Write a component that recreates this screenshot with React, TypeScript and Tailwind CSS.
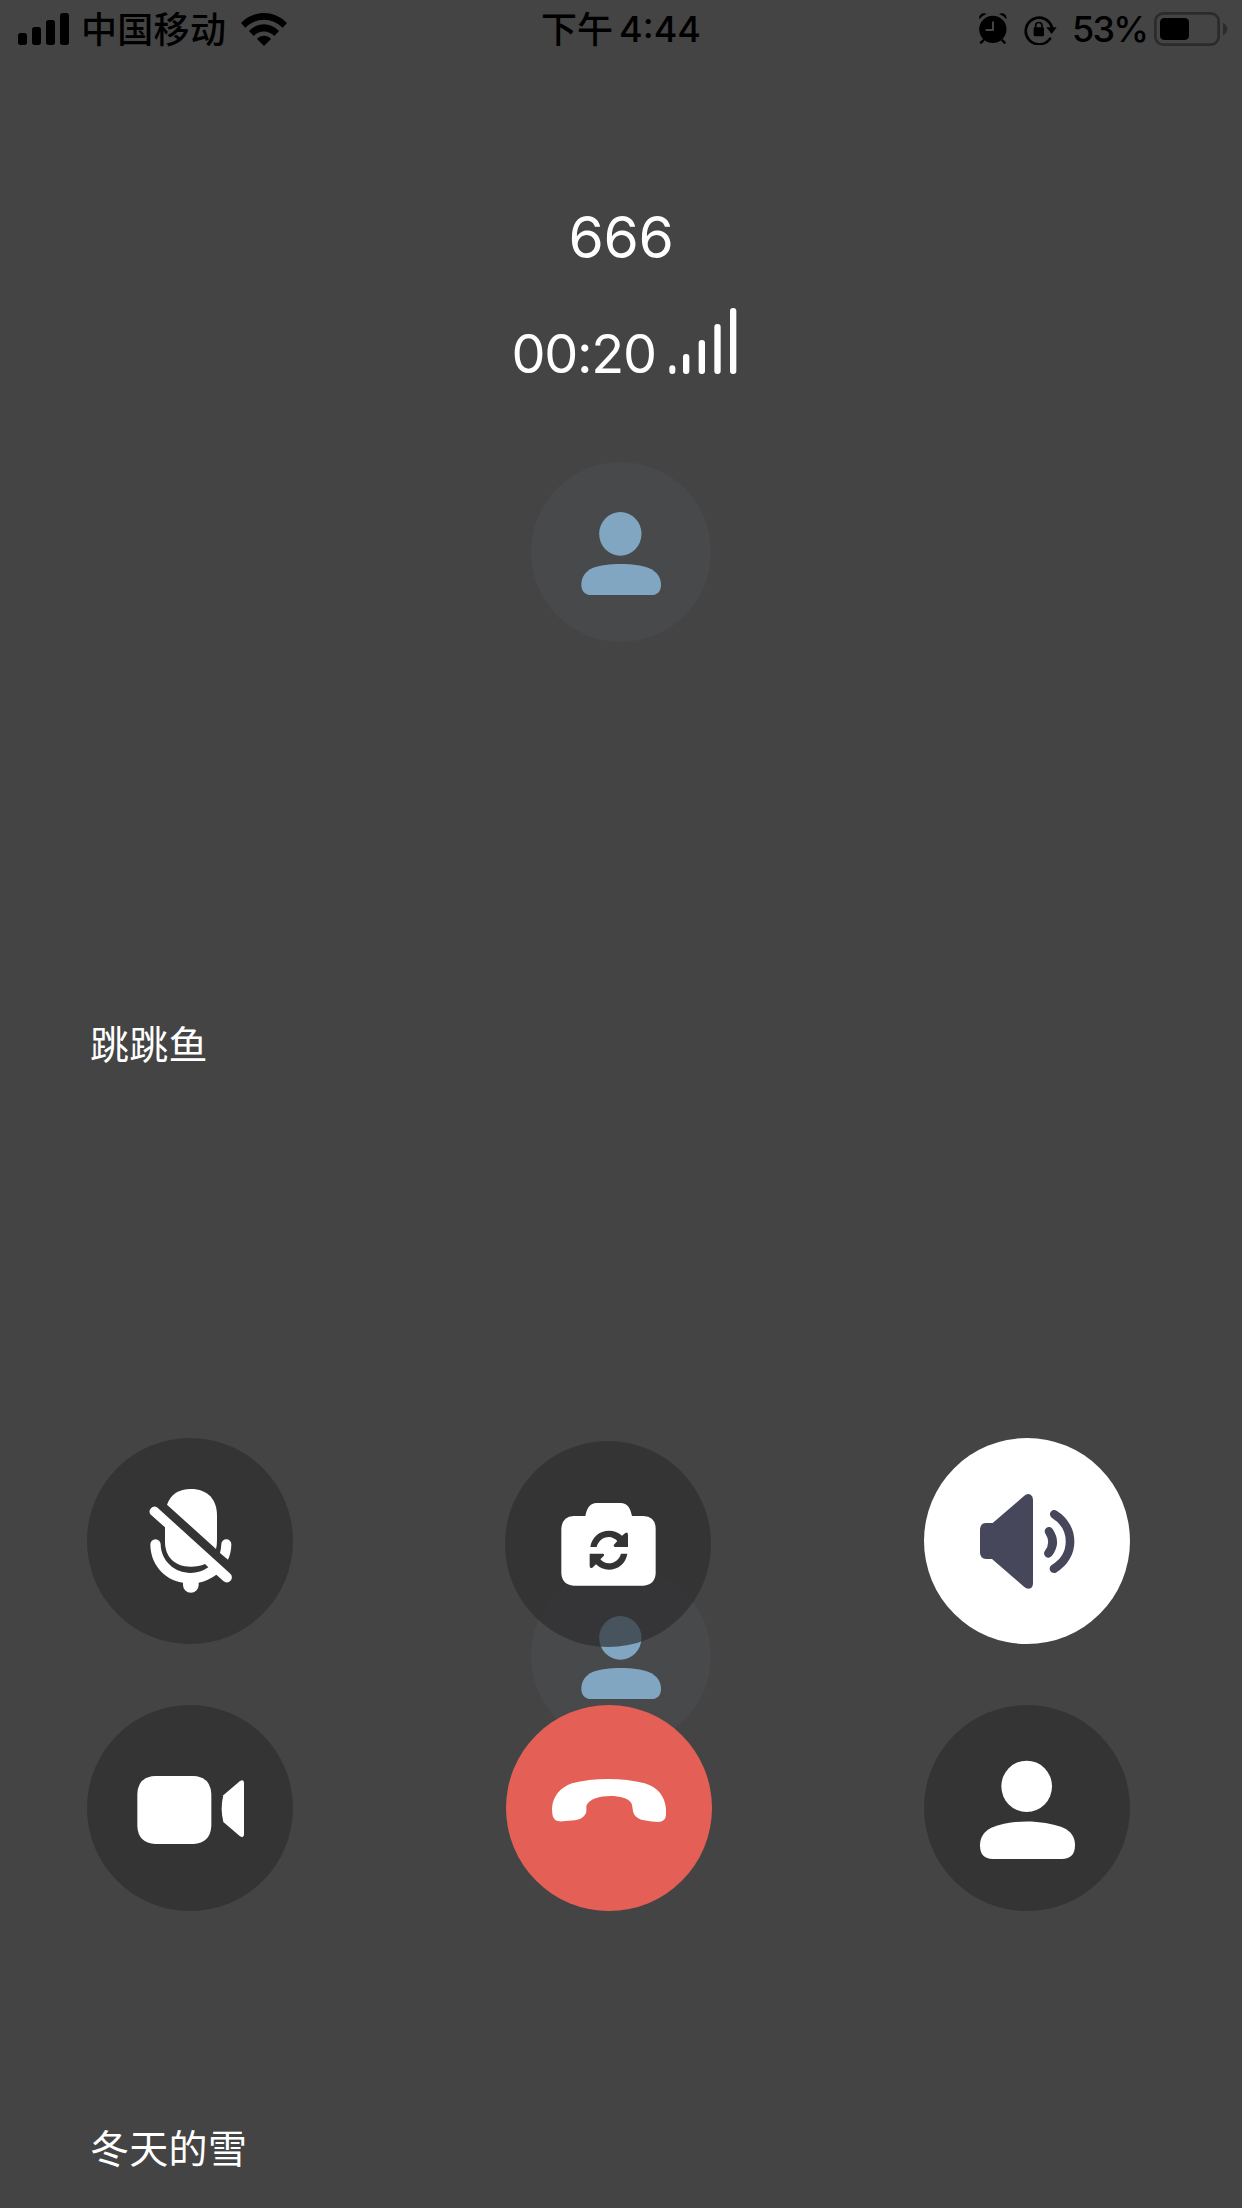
import type { ReactNode } from "react";

function StatusBar() {
  return (
    <div className="grid h-[60px] grid-cols-3 text-black">
      <div className="flex items-start">
        <svg className="ml-[18px] mt-[13px] h-8 w-[51px] shrink-0" viewBox="54 39 153 96" fill="currentColor">
          <rect x="54" y="99" width="27" height="36" rx="8" />
          <rect x="96" y="81" width="27" height="54" rx="8" />
          <rect x="138" y="60" width="27" height="75" rx="8" />
          <rect x="180" y="39" width="27" height="96" rx="8" />
        </svg>
        <span className="ml-3 mt-3 whitespace-nowrap text-[36px] leading-[36px] font-medium tracking-[0.3px]">中国移动</span>
        <svg className="ml-[15px] mt-[13px] h-[33px] w-[46px] shrink-0" viewBox="723 39 138 99" fill="currentColor">
          <path d="M723 69C762 29 822 29 861 69L848 83C816 51 768 51 736 83Z" />
          <path d="M747 93C773 66 811 66 837 93L823 108C806 90 778 90 761 108Z" />
          <path d="M771 117C783 104 801 104 813 117L792 138Z" />
        </svg>
      </div>
      <div className="flex items-start justify-center gap-[6px] whitespace-nowrap text-[36px] leading-[36px] font-medium">
        <span className="mt-3">下午</span>
        <span className="mt-[11px]">4:44</span>
      </div>
      <div className="flex items-start justify-end">
        <svg className="mt-[13px] h-[31px] w-[28px] shrink-0" viewBox="56 38 84 93">
          <circle cx="97.500" cy="87" r="41" fill="currentColor" />
          <path d="M57 57C54 44 67 35 79 41Q64 46 57 57ZM138 57C141 44 128 35 116 41Q131 46 138 57Z" fill="currentColor" />
          <path d="M69 120L62 127M126 120L133 127" stroke="currentColor" strokeWidth="7" strokeLinecap="round" />
          <path d="M98 66V89H78" fill="none" stroke="#444" strokeWidth="6" strokeLinecap="round" strokeLinejoin="round" />
        </svg>
        <svg className="ml-[17px] mt-[14px] h-[31px] w-[33px] shrink-0" viewBox="190 42 99 93">
          <path d="M268 116A40 40 0 1 1 274 83" fill="none" stroke="currentColor" strokeWidth="8" strokeLinecap="round" />
          <path d="M257 82H288L273 102Z" fill="currentColor" />
          <rect x="219" y="82" width="31" height="27" rx="4" fill="currentColor" />
          <path d="M225 84V77A9.500 9.500 0 0 1 244 77V84" fill="none" stroke="currentColor" strokeWidth="5" />
        </svg>
        <span className="ml-[15px] mt-[11px] w-[75px] whitespace-nowrap text-[36px] leading-[36px] font-[450] tracking-[-1.8px]">53%</span>
        <svg className="ml-[7px] mr-[14px] mt-3 h-[34px] w-[74px] shrink-0" viewBox="582 36 222 102">
          <rect x="586" y="40" width="190" height="94" rx="24" fill="none" stroke="#2b2b2b" strokeWidth="8" />
          <rect x="600" y="54" width="87" height="66" rx="13" fill="currentColor" />
          <path d="M789 68Q802 76 802 87Q802 98 789 106Z" fill="#2b2b2b" />
        </svg>
      </div>
    </div>
  );
}

function CallInfo() {
  return (
    <div className="flex flex-col items-center text-white">
      <h1 className="mt-[143px] text-[57px] leading-[69px] tracking-[-0.4px]">666</h1>
      <div className="ml-[9px] mt-[29px] flex h-[80px] w-[226px] items-end">
        <span className="-ml-px w-[147px] whitespace-nowrap text-[54px] leading-[54px] tracking-[-1.3px]">00:20</span>
        <svg className="mb-[7px] ml-[10px] h-[66px] w-[68px] shrink-0" viewBox="537 354 204 198" fill="currentColor">
          <rect x="538" y="526" width="18" height="26" rx="9" />
          <rect x="579" y="492" width="19" height="60" rx="9" />
          <rect x="626" y="450" width="19" height="102" rx="9" />
          <rect x="673" y="402" width="19" height="150" rx="9" />
          <rect x="720" y="354" width="19" height="198" rx="9" />
        </svg>
      </div>
    </div>
  );
}

function Participant({ name }: { name: string }) {
  return (
    <section className="relative flex h-[1104px] items-center justify-center">
      <div className="h-[180px] w-[180px] rounded-full bg-[#48494b]">
        <svg className="h-full w-full" viewBox="63 66 540 540" fill="#80a6c1">
          <ellipse cx="331" cy="281.500" rx="63.500" ry="65.500" />
          <path d="M214 434C214 412 226 394 248 384C290 368 374 368 416 384C440 394 453 412 453 434C453 454 442 465 424 465H244C226 465 214 454 214 434Z" />
        </svg>
      </div>
      <p className="absolute bottom-[34px] left-[90px] whitespace-nowrap text-[39px] leading-[50px] tracking-[0.3px] text-white">{name}</p>
    </section>
  );
}

function RoundButton({ label, className, viewBox, children }: { label: string; className: string; viewBox: string; children: ReactNode }) {
  return (
    <button aria-label={label} className={`h-[206px] w-[206px] rounded-full ${className}`}>
      <svg className="h-full w-full" viewBox={viewBox} fill="currentColor">
        {children}
      </svg>
    </button>
  );
}

const dark = "bg-[rgba(44,44,46,0.68)] text-white";

function Controls() {
  return (
    <div className="grid grid-cols-[418px_419px_206px] pl-[87px]">
      <RoundButton label="静音" className={dark} viewBox="51 54 618 618">
        <path d="M291 254C302 222 328 207 362 207C414 207 441 239 441 287V360Q441 376 438 387Z" />
        <path d="M261 262L481 461A15 15 0 0 1 460 483L439 464Q416 481 386 488V495A23.500 23.500 0 0 1 339 495V488C280 480 241 430 241 373A15.500 15.500 0 0 1 272 373C273 423 314 459 362 459Q391 459 415 442L405 432Q387 440 362 440C315 440 285 411 285 366V322L241 283A15 15 0 0 1 261 262Z" />
        <path d="M454 373A15 15 0 0 1 484 373Q484 398 474 419L450 399Q453 387 454 373Z" />
      </RoundButton>
      <RoundButton label="切换摄像头" className={`mb-[58px] mt-[3px] ${dark}`} viewBox="45 63 618 618">
        <path d="M286 288C291 264 300 249 320 249H392C412 249 421 264 426 288H460Q497 290 497 326V460Q495 495 460 497H251Q216 495 214 460V326Q216 290 251 288Z" />
        <g fill="#343434">
          <path d="M301 381C305 352 328 332 357 332Q379 332 396 347L406 339Q414 334 414 345V381H375Q368 379 373 373L382 363Q371 352 357 351C338 351 325 363 320 381Z" />
          <path d="M412 401C408 429 385 449 356 449Q335 449 318 433L307 443Q299 447 299 437V401H338Q345 402 341 408L331 418Q342 430 356 430C374 430 388 418 393 401Z" />
        </g>
      </RoundButton>
      <RoundButton label="扬声器" className="bg-white text-[#47475b]" viewBox="42 54 618 618">
        <path d="M228 309H248L342 228Q352 219 362 224Q369 228 369 239V489Q369 501 362 505Q351 509 342 500L246 417H228Q211 416 210 399V327Q211 310 228 309Z" />
        <path d="M417 334Q440 368 415 400" fill="none" stroke="currentColor" strokeWidth="26" strokeLinecap="round" />
        <path d="M433 283C496 322 496 408 432 446" fill="none" stroke="currentColor" strokeWidth="26" strokeLinecap="round" />
      </RoundButton>
      <RoundButton label="视频" className={dark} viewBox="51 45 618 618">
        <path d="M256 258H370Q421 260 424 312V408Q421 459 370 462H256Q204 459 202 408V312Q204 260 256 258Z" />
        <path d="M460 316L510 273Q522 266 522 279V433Q522 446 510 439L460 396Q450 356 460 316Z" />
      </RoundButton>
      <RoundButton label="挂断" className="ml-px bg-[#e46056] text-white" viewBox="48 855 618 618">
        <path d="M186 1166C188 1128 211 1103 246 1090C311 1073 398 1073 464 1090C503 1101 525 1130 528 1166V1185Q527 1205 504 1206Q488 1206 463 1201C439 1196 429 1184 428 1166Q426 1152 424 1149C409 1122 307 1118 289 1157V1168C291 1184 278 1196 254 1201Q235 1203 218 1204Q189 1206 187 1182Z" />
      </RoundButton>
      <RoundButton label="成员" className={dark} viewBox="42 45 618 618">
        <ellipse cx="350" cy="289" rx="76" ry="77" />
        <path d="M210 466C210 442 222 424 244 413C306 388 394 388 460 413C484 424 495 442 495 466C495 494 481 507 456 507H248C223 507 210 494 210 466Z" />
      </RoundButton>
    </div>
  );
}

export default function App() {
  return (
    <main className="relative h-[2208px] w-[1242px] overflow-hidden bg-[#444] font-['Inter','Noto_Sans_CJK_SC',sans-serif]">
      <Participant name="跳跳鱼" />
      <Participant name="冬天的雪" />
      <div className="absolute inset-0 flex flex-col justify-between pb-[297px]">
        <header>
          <StatusBar />
          <CallInfo />
        </header>
        <Controls />
      </div>
    </main>
  );
}
